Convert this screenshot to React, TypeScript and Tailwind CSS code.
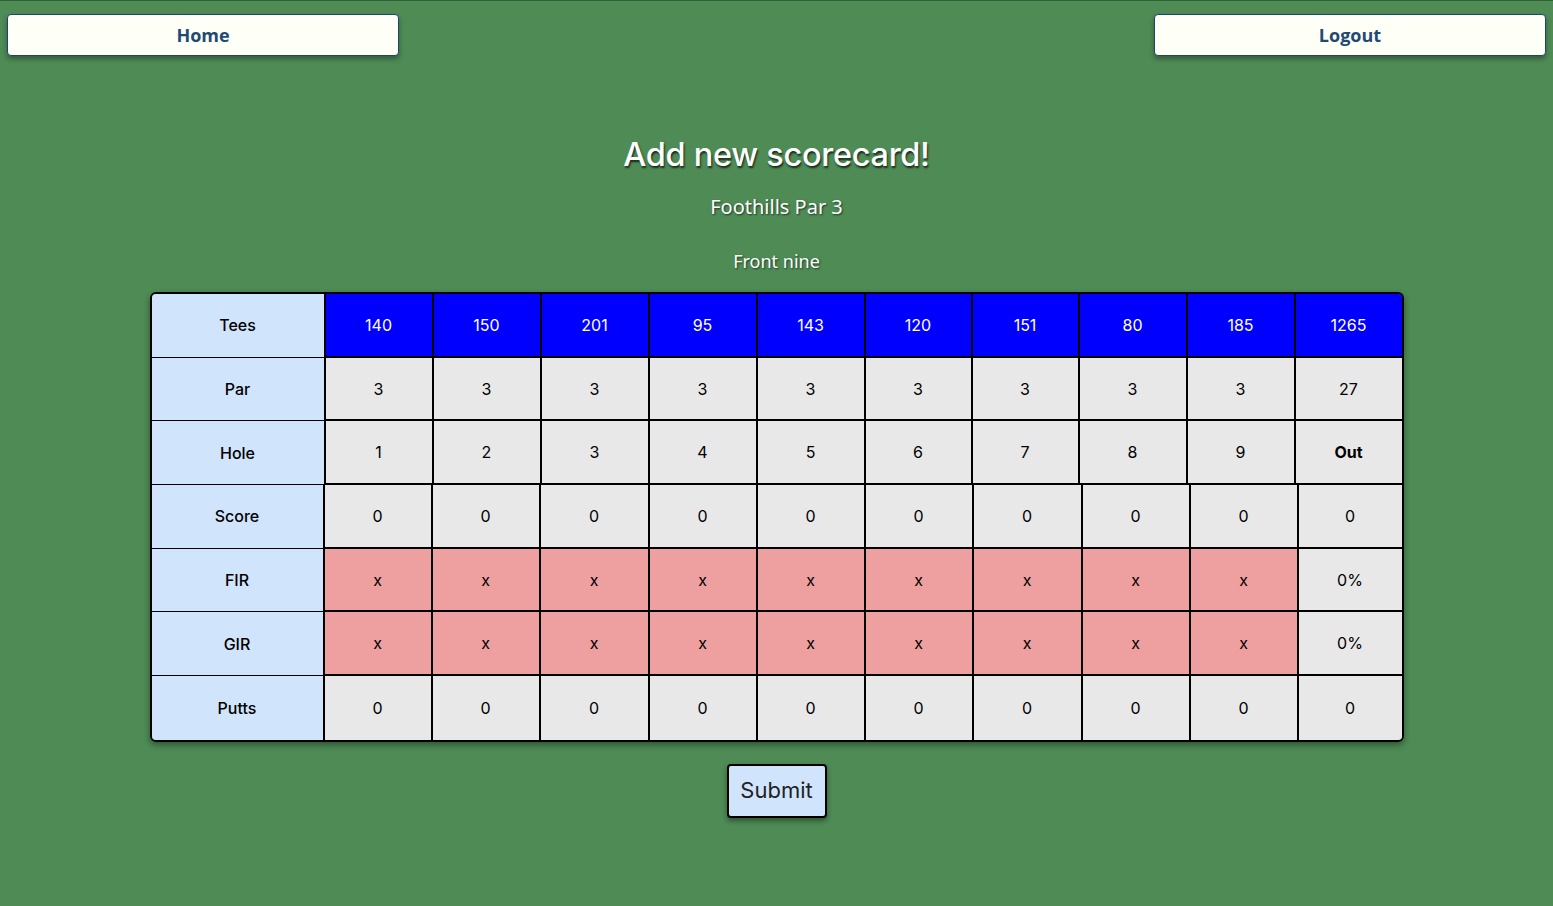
import React from 'react';

const tees = [140, 150, 201, 95, 143, 120, 151, 80, 185];
const pars = [3, 3, 3, 3, 3, 3, 3, 3, 3];

const topCols = 'grid grid-cols-[174px_108px_108px_108px_108px_108px_107px_107px_108px_108px_1fr]';
const bottomCols = 'grid grid-cols-[173px_108px_108px_109px_108px_108px_108px_109px_108px_108px_1fr]';

function Label({ text, last }: { text: string; last?: boolean }) {
    return (
        <div className={`h-[63.7px] flex items-center justify-center bg-[#d0e5fc] border-r-2 border-black text-[16px] font-medium text-black ${last ? '' : 'border-b'}`}>
            {text}
        </div>
    );
}

function Cell({ children, tone, lastCol, lastRow, bold }: { children: React.ReactNode; tone: 'blue' | 'gray' | 'red'; lastCol?: boolean; lastRow?: boolean; bold?: boolean }) {
    const bg = tone === 'blue' ? 'bg-[#0000ff] text-white' : tone === 'red' ? 'bg-[#ee9f9f] text-black' : 'bg-[#e8e8e8] text-black';
    return (
        <div className={`h-[63.7px] flex items-center justify-center text-[16px] ${bg} ${lastCol ? '' : 'border-r-2'} ${lastRow ? '' : 'border-b-2'} border-black ${bold ? 'font-bold' : ''}`}>
            {children}
        </div>
    );
}

export default function App() {
    return (
        <div className="min-h-[906px] w-full bg-[#4e8b55] border-t border-[#2f6238] font-['Inter',sans-serif]">
            {/* Nav */}
            <div className="flex justify-between px-[7px] pt-[13px]">
                <button className="w-[392px] h-[42px] bg-[#fefff6] border border-[#1e4470] rounded-[4px] shadow-[0_3px_5px_rgba(0,0,0,0.35)] text-[18px] font-bold text-[#1f4a74] font-['Open_Sans',sans-serif]">
                    Home
                </button>
                <button className="w-[392px] h-[42px] bg-[#fefff6] border border-[#1e4470] rounded-[4px] shadow-[0_3px_5px_rgba(0,0,0,0.35)] text-[18px] font-bold text-[#1f4a74] font-['Open_Sans',sans-serif]">
                    Logout
                </button>
            </div>

            {/* Heading */}
            <div className="flex flex-col items-center text-white">
                <h1 className="mt-[77px] text-[32.5px] leading-[44px] font-medium tracking-[-0.3px] [text-shadow:1px_2px_2px_rgba(0,0,0,0.7)]">
                    Add new scorecard!
                </h1>
                <p className="mt-[17px] text-[20px] leading-[26px] font-['Noto_Sans',sans-serif] [text-shadow:1px_1px_2px_rgba(0,0,0,0.6)]">
                    Foothills Par 3
                </p>
                <p className="mt-[29px] text-[18px] leading-[24px] font-['Noto_Sans',sans-serif] [text-shadow:1px_1px_2px_rgba(0,0,0,0.6)]">
                    Front nine
                </p>
            </div>

            {/* Scorecard */}
            <div className="mx-auto mt-[19px] w-[1254px] border-2 border-black rounded-[6px] overflow-hidden shadow-[0_3px_6px_rgba(0,0,0,0.4)]">
                <div className={topCols}>
                    <Label text="Tees" />
                    {tees.map((t, i) => (
                        <Cell key={`t${i}`} tone="blue">{t}</Cell>
                    ))}
                    <Cell tone="blue" lastCol>1265</Cell>

                    <Label text="Par" />
                    {pars.map((p, i) => (
                        <Cell key={`p${i}`} tone="gray">{p}</Cell>
                    ))}
                    <Cell tone="gray" lastCol>27</Cell>

                    <Label text="Hole" />
                    {pars.map((_, i) => (
                        <Cell key={`h${i}`} tone="gray">{i + 1}</Cell>
                    ))}
                    <Cell tone="gray" lastCol bold>Out</Cell>
                </div>
                <div className={bottomCols}>
                    <Label text="Score" />
                    {pars.map((_, i) => (
                        <Cell key={`s${i}`} tone="gray">0</Cell>
                    ))}
                    <Cell tone="gray" lastCol>0</Cell>

                    <Label text="FIR" />
                    {pars.map((_, i) => (
                        <Cell key={`f${i}`} tone="red">x</Cell>
                    ))}
                    <Cell tone="gray" lastCol>0%</Cell>

                    <Label text="GIR" />
                    {pars.map((_, i) => (
                        <Cell key={`g${i}`} tone="red">x</Cell>
                    ))}
                    <Cell tone="gray" lastCol>0%</Cell>

                    <Label text="Putts" last />
                    {pars.map((_, i) => (
                        <Cell key={`u${i}`} tone="gray" lastRow>0</Cell>
                    ))}
                    <Cell tone="gray" lastCol lastRow>0</Cell>
                </div>
            </div>

            <div className="flex justify-center mt-[22px]">
                <button className="w-[100px] h-[54px] bg-[#d0e5fc] border-2 border-black rounded-[4px] shadow-[0_3px_5px_rgba(0,0,0,0.4)] text-[22px] text-[#222]">
                    Submit
                </button>
            </div>
        </div>
    );
}
